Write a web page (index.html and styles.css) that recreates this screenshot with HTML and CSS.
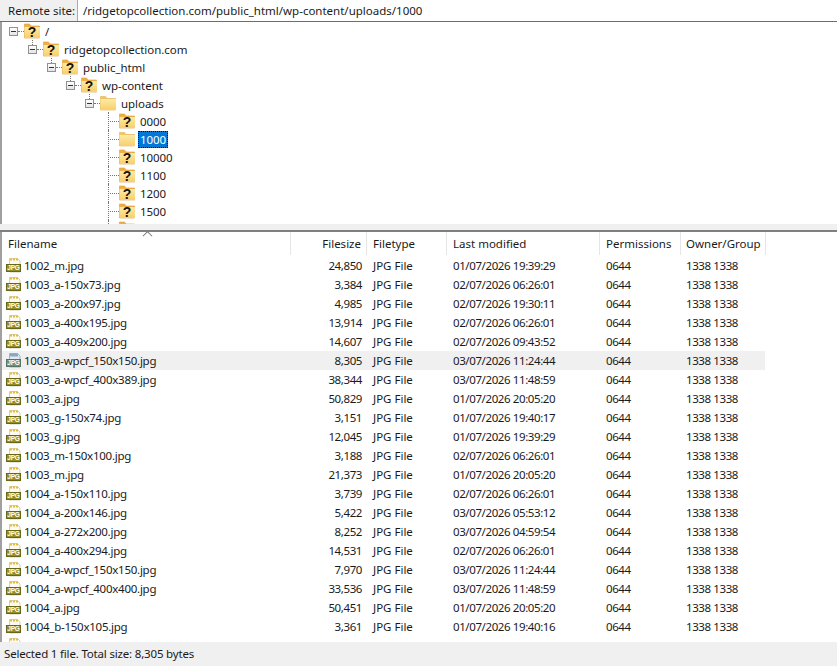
FILE: index.html
```html
<!DOCTYPE html>
<html lang="en">
<head>
    <meta charset="UTF-8">
    <title>Remote site</title>
    <link rel="stylesheet" href="styles.css">
</head>
<body>
    <svg class="icon-defs" width="0" height="0">
        <defs>
            <linearGradient id="folderFill" x1="0" y1="0" x2="0" y2="1">
                <stop offset="0" stop-color="#fdeaa5"/>
                <stop offset="1" stop-color="#f8cf6a"/>
            </linearGradient>
            <symbol id="folder" viewBox="0 0 16 16">
                <path d="M0.5 1.500h5l1.500 2h8.500v11.500h-15z" fill="#f3c560" stroke="#e0b04e" stroke-width="0.6"/>
                <rect x="0.5" y="4" width="15.500" height="11" fill="url(#folderFill)"/>
            </symbol>
            <symbol id="unknown" viewBox="0 0 16 16">
                <path d="M0.5 1h5l1.500 2h8.500v12h-15z" fill="#eeb044" stroke="#d99c36" stroke-width="0.6"/>
                <rect x="0.5" y="4" width="15.500" height="11" fill="url(#folderFill)"/>
                <text x="8" y="13.500" class="quest">?</text>
            </symbol>
            <symbol id="jpg" viewBox="0 0 17 16">
                <path d="M4.500 0.500h8l2.500 2.500v11h-10.500z" fill="#fdfbf0" stroke="#c9c49a" stroke-width="0.8"/>
                <path d="M5 1.500h8" stroke="#eab93c" stroke-width="2" stroke-dasharray="2 1"/>
                <rect x="1.500" y="6.500" width="14" height="7" fill="#8f8f2c" stroke="#666818" stroke-width="1"/>
                <text x="8.500" y="12" class="jpg-label">JPG</text>
            </symbol>
            <symbol id="jpg-sel" viewBox="0 0 17 16">
                <path d="M4.500 0.500h8l2.500 2.500v11h-10.500z" fill="#dfeaf2" stroke="#8fa6b8" stroke-width="0.8"/>
                <path d="M5 2h8" stroke="#86a9c6" stroke-width="3"/>
                <rect x="1.500" y="6.500" width="14" height="7" fill="#6f9185" stroke="#557567" stroke-width="1"/>
                <text x="8.500" y="12" class="jpg-label">JPG</text>
            </symbol>
        </defs>
    </svg>

    <div class="site-bar">
        <label class="site-label">Remote site:</label>
        <div class="site-path">/ridgetopcollection.com/public_html/wp-content/uploads/1000</div>
    </div>

    <div class="tree">
        <div class="node lvl-0 root"><span class="twist"></span><span class="dots"></span><svg class="ico"><use href="#unknown"/></svg><span class="name">/</span></div>
        <div class="node lvl-1"><span class="twist"></span><span class="dots"></span><svg class="ico"><use href="#unknown"/></svg><span class="name">ridgetopcollection.com</span></div>
        <div class="node lvl-2"><span class="twist"></span><span class="dots"></span><svg class="ico"><use href="#unknown"/></svg><span class="name">public_html</span></div>
        <div class="node lvl-3"><span class="twist"></span><span class="dots"></span><svg class="ico"><use href="#unknown"/></svg><span class="name">wp-content</span></div>
        <div class="node lvl-4"><span class="twist"></span><span class="dots"></span><svg class="ico"><use href="#folder"/></svg><span class="name">uploads</span></div>
        <div class="node lvl-5 leaf"><span class="dots"></span><svg class="ico"><use href="#unknown"/></svg><span class="name">0000</span></div>
        <div class="node lvl-5 leaf"><span class="dots"></span><svg class="ico"><use href="#folder"/></svg><span class="name selected">1000</span></div>
        <div class="node lvl-5 leaf"><span class="dots"></span><svg class="ico"><use href="#unknown"/></svg><span class="name">10000</span></div>
        <div class="node lvl-5 leaf"><span class="dots"></span><svg class="ico"><use href="#unknown"/></svg><span class="name">1100</span></div>
        <div class="node lvl-5 leaf"><span class="dots"></span><svg class="ico"><use href="#unknown"/></svg><span class="name">1200</span></div>
        <div class="node lvl-5 leaf"><span class="dots"></span><svg class="ico"><use href="#unknown"/></svg><span class="name">1500</span></div>
        <div class="node lvl-5 leaf"><span class="dots"></span><svg class="ico"><use href="#unknown"/></svg></div>
    </div>

    <div class="splitter"></div>

    <div class="files">
        <div class="row head">
            <div class="cell c-name">Filename</div>
            <span class="sort-arrow"></span>
            <div class="cell c-size">Filesize</div>
            <div class="cell c-type">Filetype</div>
            <div class="cell c-date">Last modified</div>
            <div class="cell c-perm">Permissions</div>
            <div class="cell c-owner">Owner/Group</div>
        </div>
        <div class="row"><div class="cell c-name"><svg class="ico-file"><use href="#jpg"/></svg>1002_m.jpg</div><div class="cell c-size">24,850</div><div class="cell c-type">JPG File</div><div class="cell c-date">01/07/2026 19:39:29</div><div class="cell c-perm">0644</div><div class="cell c-owner">1338 1338</div></div>
        <div class="row"><div class="cell c-name"><svg class="ico-file"><use href="#jpg"/></svg>1003_a-150x73.jpg</div><div class="cell c-size">3,384</div><div class="cell c-type">JPG File</div><div class="cell c-date">02/07/2026 06:26:01</div><div class="cell c-perm">0644</div><div class="cell c-owner">1338 1338</div></div>
        <div class="row"><div class="cell c-name"><svg class="ico-file"><use href="#jpg"/></svg>1003_a-200x97.jpg</div><div class="cell c-size">4,985</div><div class="cell c-type">JPG File</div><div class="cell c-date">02/07/2026 19:30:11</div><div class="cell c-perm">0644</div><div class="cell c-owner">1338 1338</div></div>
        <div class="row"><div class="cell c-name"><svg class="ico-file"><use href="#jpg"/></svg>1003_a-400x195.jpg</div><div class="cell c-size">13,914</div><div class="cell c-type">JPG File</div><div class="cell c-date">02/07/2026 06:26:01</div><div class="cell c-perm">0644</div><div class="cell c-owner">1338 1338</div></div>
        <div class="row"><div class="cell c-name"><svg class="ico-file"><use href="#jpg"/></svg>1003_a-409x200.jpg</div><div class="cell c-size">14,607</div><div class="cell c-type">JPG File</div><div class="cell c-date">02/07/2026 09:43:52</div><div class="cell c-perm">0644</div><div class="cell c-owner">1338 1338</div></div>
        <div class="row picked"><div class="cell c-name"><svg class="ico-file"><use href="#jpg-sel"/></svg>1003_a-wpcf_150x150.jpg</div><div class="cell c-size">8,305</div><div class="cell c-type">JPG File</div><div class="cell c-date">03/07/2026 11:24:44</div><div class="cell c-perm">0644</div><div class="cell c-owner">1338 1338</div></div>
        <div class="row"><div class="cell c-name"><svg class="ico-file"><use href="#jpg"/></svg>1003_a-wpcf_400x389.jpg</div><div class="cell c-size">38,344</div><div class="cell c-type">JPG File</div><div class="cell c-date">03/07/2026 11:48:59</div><div class="cell c-perm">0644</div><div class="cell c-owner">1338 1338</div></div>
        <div class="row"><div class="cell c-name"><svg class="ico-file"><use href="#jpg"/></svg>1003_a.jpg</div><div class="cell c-size">50,829</div><div class="cell c-type">JPG File</div><div class="cell c-date">01/07/2026 20:05:20</div><div class="cell c-perm">0644</div><div class="cell c-owner">1338 1338</div></div>
        <div class="row"><div class="cell c-name"><svg class="ico-file"><use href="#jpg"/></svg>1003_g-150x74.jpg</div><div class="cell c-size">3,151</div><div class="cell c-type">JPG File</div><div class="cell c-date">01/07/2026 19:40:17</div><div class="cell c-perm">0644</div><div class="cell c-owner">1338 1338</div></div>
        <div class="row"><div class="cell c-name"><svg class="ico-file"><use href="#jpg"/></svg>1003_g.jpg</div><div class="cell c-size">12,045</div><div class="cell c-type">JPG File</div><div class="cell c-date">01/07/2026 19:39:29</div><div class="cell c-perm">0644</div><div class="cell c-owner">1338 1338</div></div>
        <div class="row"><div class="cell c-name"><svg class="ico-file"><use href="#jpg"/></svg>1003_m-150x100.jpg</div><div class="cell c-size">3,188</div><div class="cell c-type">JPG File</div><div class="cell c-date">02/07/2026 06:26:01</div><div class="cell c-perm">0644</div><div class="cell c-owner">1338 1338</div></div>
        <div class="row"><div class="cell c-name"><svg class="ico-file"><use href="#jpg"/></svg>1003_m.jpg</div><div class="cell c-size">21,373</div><div class="cell c-type">JPG File</div><div class="cell c-date">01/07/2026 20:05:20</div><div class="cell c-perm">0644</div><div class="cell c-owner">1338 1338</div></div>
        <div class="row"><div class="cell c-name"><svg class="ico-file"><use href="#jpg"/></svg>1004_a-150x110.jpg</div><div class="cell c-size">3,739</div><div class="cell c-type">JPG File</div><div class="cell c-date">02/07/2026 06:26:01</div><div class="cell c-perm">0644</div><div class="cell c-owner">1338 1338</div></div>
        <div class="row"><div class="cell c-name"><svg class="ico-file"><use href="#jpg"/></svg>1004_a-200x146.jpg</div><div class="cell c-size">5,422</div><div class="cell c-type">JPG File</div><div class="cell c-date">03/07/2026 05:53:12</div><div class="cell c-perm">0644</div><div class="cell c-owner">1338 1338</div></div>
        <div class="row"><div class="cell c-name"><svg class="ico-file"><use href="#jpg"/></svg>1004_a-272x200.jpg</div><div class="cell c-size">8,252</div><div class="cell c-type">JPG File</div><div class="cell c-date">03/07/2026 04:59:54</div><div class="cell c-perm">0644</div><div class="cell c-owner">1338 1338</div></div>
        <div class="row"><div class="cell c-name"><svg class="ico-file"><use href="#jpg"/></svg>1004_a-400x294.jpg</div><div class="cell c-size">14,531</div><div class="cell c-type">JPG File</div><div class="cell c-date">02/07/2026 06:26:01</div><div class="cell c-perm">0644</div><div class="cell c-owner">1338 1338</div></div>
        <div class="row"><div class="cell c-name"><svg class="ico-file"><use href="#jpg"/></svg>1004_a-wpcf_150x150.jpg</div><div class="cell c-size">7,970</div><div class="cell c-type">JPG File</div><div class="cell c-date">03/07/2026 11:24:44</div><div class="cell c-perm">0644</div><div class="cell c-owner">1338 1338</div></div>
        <div class="row"><div class="cell c-name"><svg class="ico-file"><use href="#jpg"/></svg>1004_a-wpcf_400x400.jpg</div><div class="cell c-size">33,536</div><div class="cell c-type">JPG File</div><div class="cell c-date">03/07/2026 11:48:59</div><div class="cell c-perm">0644</div><div class="cell c-owner">1338 1338</div></div>
        <div class="row"><div class="cell c-name"><svg class="ico-file"><use href="#jpg"/></svg>1004_a.jpg</div><div class="cell c-size">50,451</div><div class="cell c-type">JPG File</div><div class="cell c-date">01/07/2026 20:05:20</div><div class="cell c-perm">0644</div><div class="cell c-owner">1338 1338</div></div>
        <div class="row"><div class="cell c-name"><svg class="ico-file"><use href="#jpg"/></svg>1004_b-150x105.jpg</div><div class="cell c-size">3,361</div><div class="cell c-type">JPG File</div><div class="cell c-date">01/07/2026 19:40:16</div><div class="cell c-perm">0644</div><div class="cell c-owner">1338 1338</div></div>
        <div class="row"><div class="cell c-name"><svg class="ico-file"><use href="#jpg"/></svg>1004_b-400x294.jpg</div><div class="cell c-size">19,458</div><div class="cell c-type">JPG File</div><div class="cell c-date">01/07/2026 19:40:16</div><div class="cell c-perm">0644</div><div class="cell c-owner">1338 1338</div></div>
    </div>

    <div class="status">Selected 1 file. Total size: 8,305 bytes</div>
</body>
</html>
```

FILE: styles.css
```css
* {
    box-sizing: border-box;
}

body {
    font-family: "Noto Sans", "Open Sans", sans-serif;
    font-size: 11.5px;
    color: #1a1a1a;
    background-color: #fff;
    margin: 0;
    height: 100vh;
    display: flex;
    flex-direction: column;
    overflow: hidden;
}

.icon-defs {
    position: absolute;
}

.quest {
    font-family: "Liberation Sans", sans-serif;
    font-size: 14px;
    font-weight: bold;
    fill: #111;
    text-anchor: middle;
}

.jpg-label {
    font-family: "Liberation Sans", sans-serif;
    font-size: 6.5px;
    font-weight: bold;
    fill: #fff;
    text-anchor: middle;
}

.site-bar {
    display: flex;
    height: 22px;
    flex-shrink: 0;
    background-color: #f0f0f0;
    border-bottom: 1px solid #6e6e6e;
}

.site-label {
    width: 77px;
    padding-left: 8px;
    line-height: 21px;
    white-space: nowrap;
}

.site-path {
    flex: 1;
    background-color: #fff;
    border-left: 1px solid #ababab;
    padding-left: 5px;
    line-height: 21px;
}

.tree {
    height: 202px;
    flex-shrink: 0;
    overflow: hidden;
    border-left: 2px solid #a0a0a0;
}

.node {
    display: flex;
    align-items: center;
    height: 18px;
    position: relative;
    padding-left: 7px;
}

.lvl-1 { padding-left: 26px; }
.lvl-2 { padding-left: 45px; }
.lvl-3 { padding-left: 64px; }
.lvl-4 { padding-left: 83px; }
.lvl-5 { padding-left: 102px; }

.node::before {
    content: "";
    position: absolute;
    top: 0;
    height: 5px;
    border-left: 1px dotted #777;
}

.lvl-1::before { left: 30px; }
.lvl-2::before { left: 49px; }
.lvl-3::before { left: 68px; }
.lvl-4::before { left: 87px; }
.lvl-5::before { left: 106px; height: 18px; }
.root::before { display: none; }

.twist {
    width: 9px;
    height: 9px;
    flex-shrink: 0;
    border: 1px solid #919191;
    background: linear-gradient(#fff, #e4e4e4);
    position: relative;
}

.twist::after {
    content: "";
    position: absolute;
    left: 1px;
    right: 1px;
    top: 3px;
    height: 1px;
    background-color: #333;
}

.dots {
    width: 6px;
    height: 1px;
    flex-shrink: 0;
    border-bottom: 1px dotted #777;
}

.leaf .dots {
    width: 11px;
    margin-left: 4px;
}

.ico {
    width: 16px;
    height: 16px;
    flex-shrink: 0;
}

.name {
    margin-left: 3px;
    padding: 0 2px;
    line-height: 17px;
    letter-spacing: -0.05px;
}

.selected {
    background-color: #0078d7;
    color: #fff;
    outline: 1px dotted #111;
    outline-offset: -1px;
}

.splitter {
    height: 8px;
    flex-shrink: 0;
    background-color: #f0f0f0;
    border-bottom: 2px solid #808080;
}

.files {
    flex: 1;
    min-height: 0;
    overflow: hidden;
    border-left: 2px solid #a0a0a0;
}

.row {
    display: flex;
    height: 19px;
    width: 763px;
}

.cell {
    padding-left: 6px;
    line-height: 19px;
    white-space: nowrap;
    letter-spacing: -0.4px;
}

.c-name {
    width: 289px;
    padding-left: 3px;
    display: flex;
    align-items: center;
    letter-spacing: -0.25px;
}

.c-size { width: 76px; text-align: right; padding-right: 5px; }
.c-type { width: 80px; letter-spacing: 0; }
.c-date { width: 153px; }
.c-perm { width: 81px; }
.c-owner { width: 84px; padding-left: 5px; }

.ico-file {
    width: 17px;
    height: 16px;
    flex-shrink: 0;
    margin-right: 2px;
}

.picked {
    background-color: #f0f0f0;
}

.head {
    height: 24px;
    width: auto;
    position: relative;
}

.head .cell {
    height: 23px;
    line-height: 23px;
    border-right: 1px solid #e5e5e5;
    letter-spacing: 0;
}

.head .c-name {
    padding-left: 6px;
}

.head .c-owner {
    width: 85px;
}

.sort-arrow {
    position: absolute;
    left: 142px;
    top: -1px;
    width: 7px;
    height: 7px;
    border-top: 1px solid #777;
    border-left: 1px solid #777;
    transform: rotate(45deg) translate(1px, 1px);
}

.status {
    height: 24px;
    flex-shrink: 0;
    background-color: #f0f0f0;
    padding-left: 4px;
    line-height: 24px;
    letter-spacing: -0.18px;
}
```
